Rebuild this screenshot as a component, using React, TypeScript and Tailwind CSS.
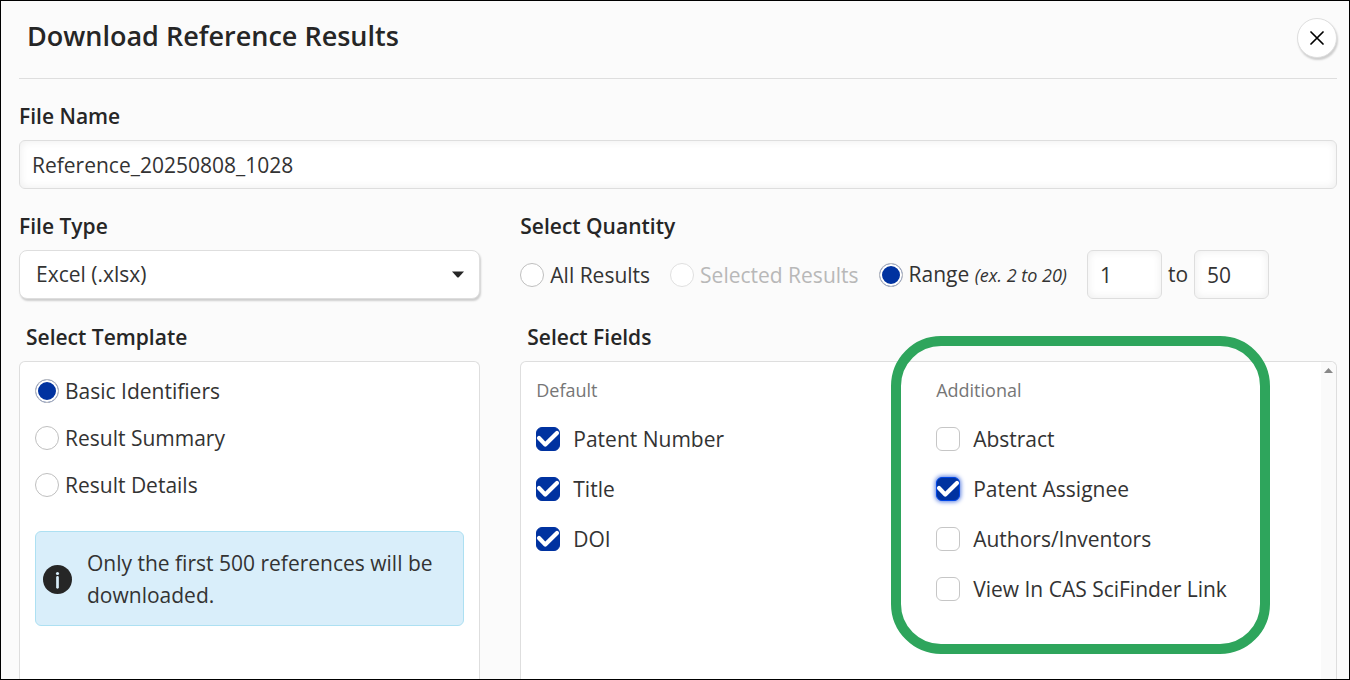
import { useState, type ReactNode } from "react"

const templates = ["Basic Identifiers", "Result Summary", "Result Details"]

const defaultFields = ["Patent Number", "Title", "DOI"]

const additionalFields = [
  "Abstract",
  "Patent Assignee",
  "Authors/Inventors",
  "View In CAS SciFinder Link",
]

const CloseIcon = () => (
  <svg width="14" height="14" viewBox="0 0 14 14" fill="none" aria-hidden="true">
    <path d="M1 1L13 13M13 1L1 13" stroke="#000" strokeWidth="1.7" strokeLinecap="round" />
  </svg>
)

const InfoIcon = () => (
  <svg className="shrink-0" width="29" height="29" viewBox="0 0 28 28" aria-hidden="true">
    <circle cx="14" cy="14" r="14" fill="#262626" />
    <circle cx="14" cy="8.2" r="1.5" fill="#d9eefa" />
    <path d="M14 12V21.6" stroke="#d9eefa" strokeWidth="2.6" strokeLinecap="round" />
  </svg>
)

const Label = ({ children, htmlFor }: { children: ReactNode; htmlFor: string }) => (
  <label htmlFor={htmlFor} className="block font-semibold leading-6 text-[#262626]">
    {children}
  </label>
)

type RadioProps = {
  name: string
  label: ReactNode
  checked?: boolean
  disabled?: boolean
  onChange?: () => void
}

const Radio = ({ name, label, checked = false, disabled = false, onChange }: RadioProps) => (
  <label className={`flex items-center gap-1.5 leading-6 ${disabled ? "text-[#b8b8b8]" : ""}`}>
    <input
      type="radio"
      name={name}
      checked={checked}
      disabled={disabled}
      onChange={() => onChange?.()}
      className="size-6 shrink-0 appearance-none rounded-full border border-[#bfbfbf] bg-white checked:bg-[#0032a0] checked:shadow-[inset_0_0_0_2px_#fff] disabled:border-[#e0e0e0]"
    />
    <span>{label}</span>
  </label>
)

type CheckboxProps = {
  label: string
  checked: boolean
  focused?: boolean
  onChange: () => void
}

const Checkbox = ({ label, checked, focused = false, onChange }: CheckboxProps) => (
  <label className="flex items-center gap-[13px] leading-6">
    <span className="grid size-6 shrink-0">
      <input
        type="checkbox"
        checked={checked}
        onChange={onChange}
        className={`peer size-6 appearance-none rounded-md border border-[#c6c6c6] bg-white [grid-area:1/1] ${
          focused
            ? "checked:border-[#0046e6] checked:bg-[#0032a0] shadow-[0_0_4px_1px_#5b7fe0]"
            : "checked:border-[#0032a0] checked:bg-[#0032a0]"
        }`}
      />
      <svg
        className="pointer-events-none invisible [grid-area:1/1] peer-checked:visible"
        width="24"
        height="24"
        viewBox="0 0 24 24"
        fill="none"
        aria-hidden="true"
      >
        <path
          d="M3 11L9.3 17.6L21 6"
          stroke="#fff"
          strokeWidth="4.2"
          strokeLinecap="round"
          strokeLinejoin="round"
        />
      </svg>
    </span>
    <span>{label}</span>
  </label>
)

const inputClass =
  "h-[49px] rounded-md border border-[#dedede] bg-white px-3 shadow-[inset_0_0_8px_rgba(0,0,0,0.08)] outline-none"

export default function App() {
  const [fileName, setFileName] = useState("Reference_20250808_1028")
  const [quantity, setQuantity] = useState("range")
  const [from, setFrom] = useState("1")
  const [to, setTo] = useState("50")
  const [template, setTemplate] = useState(templates[0])
  const [fields, setFields] = useState([...defaultFields, "Patent Assignee"])

  const toggleField = (field: string) =>
    setFields((prev) =>
      prev.includes(field) ? prev.filter((f) => f !== field) : [...prev, field]
    )

  return (
    <div className="flex min-h-screen flex-col border border-black bg-[#fbfbfb] pl-[18px] pr-3 font-['Open_Sans','Noto_Sans',sans-serif] text-[21px] text-[#333]">
      <header className="flex items-start justify-between border-b border-[#dedede] pb-5 pt-[17px]">
        <h1 className="pl-2 text-[27px] font-semibold leading-9 text-[#262626]">
          Download Reference Results
        </h1>
        <button
          aria-label="Close"
          className="flex size-10 items-center justify-center rounded-full border border-[#dedede] bg-white shadow-[1px_2px_2px_rgba(0,0,0,0.18)]"
        >
          <CloseIcon />
        </button>
      </header>

      <form className="flex flex-1 flex-col pt-[25px]" onSubmit={(e) => e.preventDefault()}>
        <div className="flex flex-col gap-3">
          <Label htmlFor="file-name">File Name</Label>
          <input
            id="file-name"
            type="text"
            value={fileName}
            onChange={(e) => setFileName(e.target.value)}
            className={`${inputClass} w-full`}
          />
        </div>

        <div className="mt-[25px] flex gap-10">
          <div className="flex w-[35%] shrink-0 flex-col gap-3">
            <Label htmlFor="file-type">File Type</Label>
            <div className="relative">
              <select
                id="file-type"
                className="h-[49px] w-full appearance-none rounded-lg border border-[#dedede] bg-white px-4 shadow-[1px_2px_2px_rgba(0,0,0,0.18)] outline-none"
              >
                <option>Excel (.xlsx)</option>
              </select>
              <svg
                className="pointer-events-none absolute right-4 top-[21px]"
                width="12"
                height="7"
                viewBox="0 0 12 7"
                aria-hidden="true"
              >
                <path d="M0 0.5H12L6.8 6.2Q6 7 5.2 6.2Z" fill="#262626" />
              </svg>
            </div>
          </div>

          <fieldset className="flex-1">
            <legend className="mb-3 block font-semibold leading-6 text-[#262626]">
              Select Quantity
            </legend>
            <div className="flex items-center whitespace-nowrap">
              <div className="flex gap-5">
                <Radio
                  name="quantity"
                  label="All Results"
                  checked={quantity === "all"}
                  onChange={() => setQuantity("all")}
                />
                <Radio name="quantity" label="Selected Results" disabled />
                <Radio
                  name="quantity"
                  label={
                    <>
                      Range <em className="text-[18px]">(ex. 2 to 20)</em>
                    </>
                  }
                  checked={quantity === "range"}
                  onChange={() => setQuantity("range")}
                />
              </div>
              <div className="ml-5 flex items-center gap-1.5">
                <input
                  type="text"
                  aria-label="Range start"
                  value={from}
                  onChange={(e) => setFrom(e.target.value)}
                  className={`${inputClass} w-[75px]`}
                />
                <span>to</span>
                <input
                  type="text"
                  aria-label="Range end"
                  value={to}
                  onChange={(e) => setTo(e.target.value)}
                  className={`${inputClass} w-[75px]`}
                />
              </div>
            </div>
          </fieldset>
        </div>

        <div className="mt-[26px] flex flex-1 gap-10">
          <section className="flex w-[35%] shrink-0 flex-col gap-3">
            <h2 className="pl-[7px] font-semibold leading-6 text-[#262626]">Select Template</h2>
            <div className="flex-1 rounded-t-md border border-b-0 border-[#dedede] bg-white px-[15px] pt-[17px]">
              <div className="flex flex-col gap-[23px]">
                {templates.map((name) => (
                  <Radio
                    key={name}
                    name="template"
                    label={name}
                    checked={template === name}
                    onChange={() => setTemplate(name)}
                  />
                ))}
              </div>
              <div className="mt-[34px] flex items-center gap-[15px] rounded-md border border-[#ade0f2] bg-[#d9eefa] pb-[14px] pl-[7px] pr-4 pt-[15px]">
                <InfoIcon />
                <p className="leading-8">Only the first 500 references will be downloaded.</p>
              </div>
            </div>
          </section>

          <section className="flex flex-1 flex-col gap-3">
            <h2 className="pl-[7px] font-semibold leading-6 text-[#262626]">Select Fields</h2>
            <div className="flex flex-1 rounded-t-md border border-b-0 border-[#dedede] bg-white">
              <div className="grid flex-1 grid-cols-2">
                <div className="px-[15px] pt-4">
                  <h3 className="text-[18px] leading-6 text-[#767676]">Default</h3>
                  <div className="mt-[25px] flex flex-col gap-[26px]">
                    {defaultFields.map((field) => (
                      <Checkbox
                        key={field}
                        label={field}
                        checked={fields.includes(field)}
                        onChange={() => toggleField(field)}
                      />
                    ))}
                  </div>
                </div>
                <div className="relative px-[15px] pt-4">
                  <h3 className="text-[18px] leading-6 text-[#767676]">Additional</h3>
                  <div className="mt-[25px] flex flex-col gap-[26px]">
                    {additionalFields.map((field) => (
                      <Checkbox
                        key={field}
                        label={field}
                        checked={fields.includes(field)}
                        focused={field === "Patent Assignee"}
                        onChange={() => toggleField(field)}
                      />
                    ))}
                  </div>
                  {/* Highlight around the optional fields */}
                  <div className="pointer-events-none absolute -left-[30px] -top-[26px] right-[51px] h-[318px] rounded-[50px] border-10 border-[#2ea55c]" />
                </div>
              </div>
              <div className="flex w-[15px] justify-center rounded-tr-md bg-[#fafafa] pt-1.5">
                <svg width="9" height="5" viewBox="0 0 9 5" aria-hidden="true">
                  <path d="M4.5 0L9 5H0Z" fill="#888" />
                </svg>
              </div>
            </div>
          </section>
        </div>
      </form>
    </div>
  )
}
